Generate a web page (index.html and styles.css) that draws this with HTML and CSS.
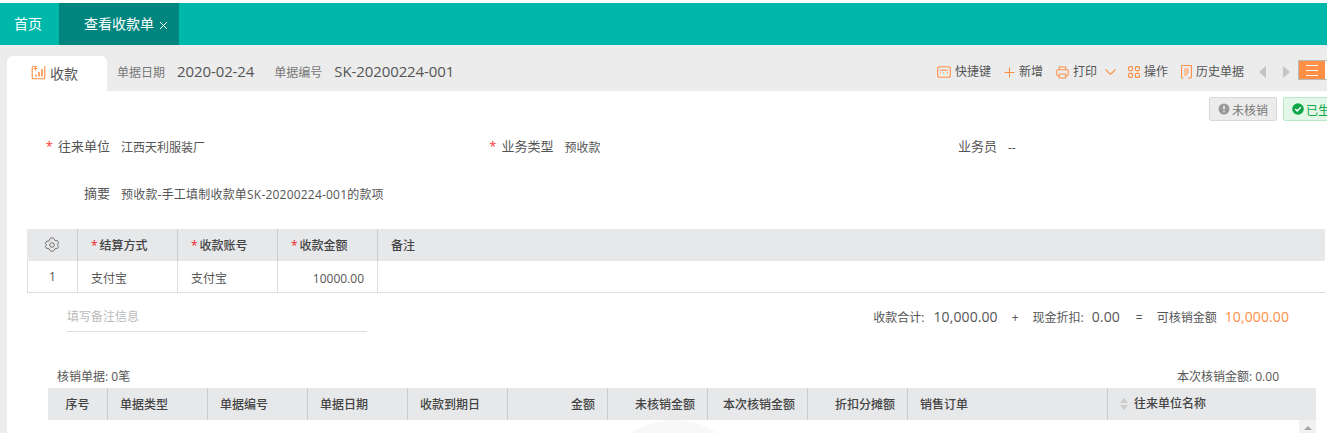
FILE: index.html
```html
<!DOCTYPE html>
<html lang="zh">
<head>
<meta charset="utf-8">
<title>查看收款单</title>
<link rel="stylesheet" href="styles.css">
</head>
<body>
<nav class="topbar">
  <a class="top-home">首页</a>
  <a class="top-tab">查看收款单<svg class="top-x" viewBox="0 0 9 9"><path d="M1 1l7 7M8 1L1 8"/></svg></a>
</nav>
<div class="shell">
  <header class="head">
    <div class="doc-tab">
      <svg class="doc-icon" viewBox="0 0 15 15"><path class="ln" d="M5.500 1.500H2.200a1 1 0 0 0-1 1v10.300a1 1 0 0 0 1 1h10.600a1 1 0 0 0 1-1V1"/><path class="ln" d="M2.500 3.500h4M4.500 1.500v4"/><path class="ln bar" d="M5 11.500V9.500M8 11.500V7M11 11.500V4"/></svg>
      <span>收款</span>
    </div>
    <span class="meta-label date-label">单据日期</span><span class="meta-value date-value">2020-02-24</span>
    <span class="meta-label no-label">单据编号</span><span class="meta-value">SK-20200224-001</span>
    <div class="tools">
      <span class="tool t1"><svg class="ti" viewBox="0 0 14 14"><rect class="ln" x=".7" y="1.700" width="12.600" height="10.600" rx="2"/><path class="ln" d="M3 5.200h8M3 8h1M6 8h1M9.500 8h1.500"/></svg>快捷键</span>
      <span class="tool t2"><svg class="ti small" viewBox="0 0 11 11"><path class="ln" d="M5.500.5v10M.5 5.500h10"/></svg>新增</span>
      <span class="tool t3"><svg class="ti print" viewBox="0 0 14 14"><path class="ln" d="M3.500 4V1h7v3M3.500 10.500H1.800a1 1 0 0 1-1-1V5a1 1 0 0 1 1-1h10.400a1 1 0 0 1 1 1v4.500a1 1 0 0 1-1 1h-1.700M3.500 8.500h7V13h-7z"/></svg>打印</span>
      <svg class="chev" viewBox="0 0 11 6"><path class="ln" d="M.5.500l5 5 5-5"/></svg>
      <span class="tool t4"><svg class="ti grid" viewBox="0 0 12 12"><rect class="ln" x=".6" y=".6" width="4" height="4" rx="1"/><rect class="ln" x="7.400" y=".6" width="4" height="4" rx="1"/><rect class="ln" x=".6" y="7.400" width="4" height="4" rx="1"/><rect class="ln" x="7.400" y="7.400" width="4" height="4" rx="1"/></svg>操作</span>
      <span class="tool t5"><svg class="ti hist" viewBox="0 0 11 14"><path class="ln" d="M2.500 13H1.500a1 1 0 0 1-1-1V1.500a1 1 0 0 1 1-1h8a1 1 0 0 1 1 1V12a1 1 0 0 1-1 1H7"/><path class="fl" d="M3 3h5v4.500L5.500 11H3z"/></svg>历史单据</span>
      <i class="arrow left"></i>
      <i class="arrow right"></i>
      <div class="menu-btn"><span class="menu-on"><b></b><b></b><b></b></span></div>
    </div>
  </header>
  <main class="sheet">
    <div class="badges">
      <span class="badge gray"><svg class="bi" viewBox="0 0 12 12"><circle cx="6" cy="6" r="5.500" fill="#999"/><path d="M6 2.800v3.600M6 8v1.200" stroke="#eee" stroke-width="1.500"/></svg><span class="badge-text">未核销</span></span>
      <span class="badge green"><svg class="bi" viewBox="0 0 12 12"><circle cx="6" cy="6" r="5.800" fill="#0fa748"/><path d="M3.200 6l2 2 3.600-3.800" fill="none" stroke="#fff" stroke-width="1.500"/></svg><span class="badge-text">已生效</span></span>
    </div>
    <div class="form-row">
      <div class="field"><label class="req">往来单位</label><span>江西天利服装厂</span></div>
      <div class="field"><label class="req">业务类型</label><span>预收款</span></div>
      <div class="field"><label>业务员</label><span>--</span></div>
    </div>
    <div class="form-row memo">
      <div class="field"><label>摘要</label><span class="nowrap">预收款-手工填制收款单SK-20200224-001的款项</span></div>
    </div>
    <div class="grid1">
      <div class="g1-head">
        <div class="c0"><svg class="gear" viewBox="0 0 16 16"><path d="M5.800 1.800l1-.8h2.400l1 .8.500 1.300 1.300.7 1.400-.2 1.200 2.100-.9 1.100v1.500l.9 1.100-1.200 2.100-1.400-.2-1.300.7-.5 1.300-1 .8H6.800l-1-.8-.5-1.300-1.300-.7-1.400.2-1.200-2.100.9-1.100V7.400l-.9-1.100 1.200-2.100 1.400.2 1.300-.7z" fill="none" stroke="#666" stroke-width=".9"/><circle cx="8" cy="8" r="2.300" fill="none" stroke="#666" stroke-width=".9"/></svg></div>
        <div class="c1"><em>*</em>结算方式</div>
        <div class="c1"><em>*</em>收款账号</div>
        <div class="c1"><em>*</em>收款金额</div>
        <div class="c1 last">备注</div>
      </div>
      <div class="g1-row">
        <div class="c0">1</div>
        <div class="c1">支付宝</div>
        <div class="c1">支付宝</div>
        <div class="c1 num">10000.00</div>
        <div class="c1 last"></div>
      </div>
    </div>
    <div class="sum-row">
      <div class="note">填写备注信息</div>
      <div class="sum">
        <span>收款合计:</span><span class="big first">10,000.00</span>
        <span class="op op1">+</span>
        <span>现金折扣:</span><span class="big">0.00</span>
        <span class="op op2">=</span>
        <span>可核销金额</span><span class="big orange">10,000.00</span>
      </div>
    </div>
    <div class="cap-row">
      <span>核销单据: 0笔</span>
      <span>本次核销金额: 0.00</span>
    </div>
    <div class="grid2">
      <div class="h2 w60 ctr">序号</div>
      <div class="h2 w100">单据类型</div>
      <div class="h2 w100">单据编号</div>
      <div class="h2 w100">单据日期</div>
      <div class="h2 w100">收款到期日</div>
      <div class="h2 w100 rt">金额</div>
      <div class="h2 w100 rt">未核销金额</div>
      <div class="h2 w100 rt">本次核销金额</div>
      <div class="h2 w100 rt">折扣分摊额</div>
      <div class="h2 w200">销售订单</div>
      <div class="h2 wrest"><span class="sort"><i class="up"></i><i class="dn"></i></span>往来单位名称</div>
    </div>
    <div class="g2-body">
      <div class="ghost"></div>
      <div class="scroll"><i></i></div>
    </div>
  </main>
</div>
</body>
</html>
```
FILE: styles.css
```css
* { box-sizing: border-box; }
html, body { margin: 0; height: 433px; overflow: hidden; background: #fff; }
body {
  padding-top: 3px;
  font-family: "Open Sans", "Noto Sans CJK SC", sans-serif;
  font-size: 12px;
  color: #555;
  width: 1327px;
}
.ln { fill: none; stroke: #ff8f45; stroke-width: 1.1; }
.ln.bar { stroke-width: 1.6; }
.fl { fill: #ffc49d; }

.topbar { display: flex; height: 42px; background: #00b8aa; color: #fff; font-size: 14px; line-height: 42px; }
.top-home { width: 59px; padding-left: 14px; }
.top-tab { width: 120px; background: #00867e; padding-left: 25px; display: flex; align-items: center; }
.top-x { width: 9px; height: 9px; margin-left: 5px; margin-top: 2px; fill: none; stroke: #fff; stroke-width: 1; }

.shell { background: #ececec; padding-left: 7px; height: 388px; display: flex; flex-direction: column; }
.head { height: 46px; margin-left: -7px; padding-left: 7px; display: flex; align-items: flex-end; flex: none; }
.doc-tab { width: 100px; height: 35px; background: #fff; border-radius: 6px 6px 0 0; display: flex; align-items: center; padding: 0 0 2px 24px; font-size: 14px; color: #555; flex: none; }
.doc-icon { width: 15px; height: 15px; margin-right: 4px; }
.meta-label { align-self: center; margin-top: 7px; color: #777; }
.meta-value { align-self: center; margin-top: 6px; font-size: 15px; letter-spacing: -.1px; color: #555; }
.date-label { margin-left: 10px; }
.date-value { margin-left: 12px; }
.no-label { margin-left: 20px; margin-right: 12px; }
.tools { margin-left: auto; align-self: stretch; display: flex; align-items: center; padding-top: 8px; white-space: nowrap; flex: none; width: 390px; }
.tool { display: flex; align-items: center; color: #555; line-height: 16px; flex: none; }
.ti { width: 14px; height: 14px; margin-right: 4px; flex: none; }
.ti.small { width: 11px; height: 11px; margin-right: 4px; }
.ti.print { width: 13px; height: 13px; }
.ti.grid { width: 12px; height: 12px; }
.ti.hist { width: 11px; height: 14px; margin-right: 4px; }
.t2 { margin-left: 13px; }
.t3 { margin-left: 13px; }
.chev { width: 11px; height: 6px; margin-left: 8px; flex: none; }
.t4 { margin-left: 12px; }
.t5 { margin-left: 13px; }
.arrow { width: 0; height: 0; border-style: solid; border-color: transparent; flex: none; }
.arrow.left { margin-left: 15px; border-width: 6px 7px 6px 0; border-right-color: #c4c4c4; }
.arrow.right { margin-left: 17px; border-width: 6px 0 6px 7px; border-left-color: #c4c4c4; }
.menu-btn { margin: -4px 0 0 8px; width: 40px; height: 20px; background: #fff; border: 1px solid #bbb; flex: none; }
.menu-on { display: flex; flex-direction: column; justify-content: center; gap: 4px; width: 26px; height: 18px; background: #ff8f45; padding: 0 7px; }
.menu-on b { display: block; height: 1px; background: #fff; }

.sheet { flex: 1; background: #fff; min-height: 0; overflow: hidden; }
.badges { display: flex; gap: 6px; padding: 6px 0 0 1202px; height: 30px; white-space: nowrap; }
.badge { display: flex; align-items: center; height: 24px; border-radius: 2px; padding: 0 0 0 8px; border: 1px solid; flex: none; width: 68px; }
.badge-text { padding-top: 2px; }
.badge.gray { background: #ececec; border-color: #d9d9d9; color: #777; }
.badge.green { background: #e3f7e9; border-color: #b9e9c8; color: #0fa748; }
.bi { width: 12px; height: 12px; margin-right: 2px; flex: none; }

.form-row { display: grid; grid-template-columns: repeat(3, 443.5px); margin-top: 14px; height: 24px; }
.form-row.memo { margin-top: 23px; }
.field { display: flex; align-items: center; height: 24px; }
.field label { width: 103px; text-align: right; margin-right: 11px; color: #555; flex: none; margin-top: -3px; font-size: 13px; white-space: nowrap; }
.field span { color: #555; }
.nowrap { white-space: nowrap; letter-spacing: .2px; }
.req::before { content: "*"; color: #f33; margin-right: 5px; }

.grid1 { margin: 23px 0 0 20px; width: 1298px; }
.g1-head, .g1-row { display: flex; }
.g1-head { height: 32px; background: #e7e8ea; font-weight: 500; color: #444; line-height: 34px; }
.g1-row { height: 32px; line-height: 35px; border-bottom: 1px solid #ddd; }
.c0 { width: 51px; text-align: center; border-left: 1px solid #ddd; border-right: 1px solid #ccc; display: flex; align-items: center; justify-content: center; }
.g1-head .c0 { border-left: 0; }
.c1 { width: 100px; padding-left: 13px; border-right: 1px solid #ccc; }
.g1-head .c1 { padding-left: 13px; }
.g1-row .c0, .g1-row .c1 { border-right-color: #ddd; }
.c1.last { flex: 1; border-right: 0; }
.c1 em { color: #e22; font-style: normal; margin-right: 2px; }
.num { text-align: right; padding-right: 13px; padding-left: 0; }
.gear { width: 16px; height: 16px; }

.sum-row { display: flex; justify-content: space-between; padding: 9px 38px 0 60px; height: 39px; }
.note { width: 300px; height: 30px; border-bottom: 1px solid #ddd; color: #bbb; line-height: 30px; }
.sum { display: flex; align-items: baseline; height: 30px; line-height: 30px; color: #555; }
.big { font-size: 14px; letter-spacing: .1px; margin-left: 8px; }
.big.first { margin-left: 9px; }
.orange { color: #ff8f45; }
.op { margin: 0 14px; }
.op2 { margin-left: 16px; }
.cap-row { display: flex; justify-content: space-between; padding: 0 48px 0 50px; margin-top: 36px; height: 20px; line-height: 18px; align-items: flex-start; }

.grid2 { display: flex; margin-left: 41px; width: 1268px; height: 32px; background: #e7e8ea; font-weight: 500; color: #444; line-height: 34px; white-space: nowrap; }
.h2 { padding: 0 12px; border-right: 1px solid #ccc; flex: none; }
.w60 { width: 60px; }
.w100 { width: 100px; }
.w200 { width: 200px; }
.wrest { flex: 1; border-right: 0; display: flex; align-items: center; }
.ctr { text-align: center; }
.rt { text-align: right; }
.sort { display: inline-flex; flex-direction: column; gap: 2px; margin-right: 6px; }
.sort i { width: 0; height: 0; border-style: solid; border-color: transparent; }
.sort .up { border-width: 0 4px 5px; border-bottom-color: #ccc; }
.sort .dn { border-width: 5px 4px 0; border-top-color: #ccc; }

.g2-body { position: relative; margin-left: 41px; width: 1268px; height: 13px; overflow: hidden; }
.ghost { position: absolute; left: 547px; top: 0; width: 158px; height: 158px; border-radius: 50%; background: #f8f8f8; }
.scroll { position: absolute; right: 0; top: 0; width: 17px; height: 13px; background: #f1f1f1; display: flex; justify-content: center; padding-top: 6px; }
.scroll i { width: 0; height: 0; border-style: solid; border-color: transparent; border-width: 0 4px 4px; border-bottom-color: #a3a3a3; }
```
